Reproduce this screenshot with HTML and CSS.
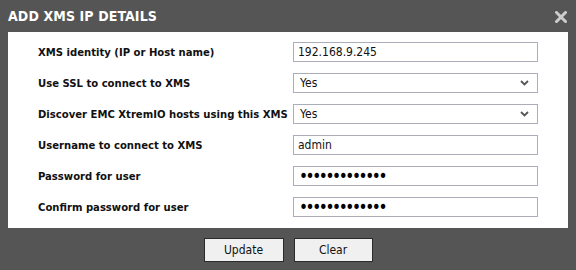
FILE: index.html
```html
<!DOCTYPE html>
<html>
<head>
<meta charset="utf-8">
<link rel="stylesheet" href="styles.css">
</head>
<body>
<div class="dialog">
  <div class="titlebar">
    <span class="title">ADD XMS IP DETAILS</span>
    <svg class="close" width="12" height="12" viewBox="0 0 12 12"><path d="M1.5 1.5 L10.5 10.5 M10.5 1.5 L1.5 10.5" stroke="#cccccc" stroke-width="3" stroke-linecap="square"/></svg>
  </div>
  <div class="panel">
    <div class="row">
      <label class="label">XMS identity (IP or Host name)</label>
      <input class="field" type="text" value="192.168.9.245">
    </div>
    <div class="row">
      <label class="label">Use SSL to connect to XMS</label>
      <div class="select"><span>Yes</span><svg class="chev" width="9" height="6" viewBox="0 0 9 6"><path d="M1 1 L4.5 4.5 L8 1" fill="none" stroke="#555" stroke-width="1.8"/></svg></div>
    </div>
    <div class="row">
      <label class="label">Discover EMC XtremIO hosts using this XMS</label>
      <div class="select"><span>Yes</span><svg class="chev" width="9" height="6" viewBox="0 0 9 6"><path d="M1 1 L4.5 4.5 L8 1" fill="none" stroke="#555" stroke-width="1.8"/></svg></div>
    </div>
    <div class="row">
      <label class="label">Username to connect to XMS</label>
      <input class="field" type="text" value="admin">
    </div>
    <div class="row">
      <label class="label">Password for user</label>
      <input class="field pw" type="password" value="abcdefghijklm">
    </div>
    <div class="row">
      <label class="label">Confirm password for user</label>
      <input class="field pw" type="password" value="abcdefghijklm">
    </div>
  </div>
  <div class="buttons">
    <button class="btn btn-update">Update</button>
    <button class="btn btn-clear">Clear</button>
  </div>
</div>
</body>
</html>
```
FILE: styles.css
```css
html, body {
  margin: 0;
  padding: 0;
  background: #555555;
}
body {
  width: 576px;
  height: 270px;
  overflow: hidden;
  font-family: "DejaVu Sans Condensed", "DejaVu Sans", sans-serif;
}
.dialog {
  display: flex;
  flex-direction: column;
}
.titlebar {
  height: 32px;
  display: flex;
  align-items: center;
  justify-content: space-between;
  padding: 0 9px 0 8px;
  box-sizing: border-box;
}
.title {
  color: #ffffff;
  font-weight: bold;
  font-size: 14px;
  letter-spacing: 0.1px;
}
.close {
  display: block;
  margin-top: 1px;
}
.panel {
  margin: 0 8px;
  background: #ffffff;
  padding: 10px 0 11px 30px;
  display: flex;
  flex-direction: column;
  gap: 11px;
}
.row {
  display: flex;
  align-items: center;
  height: 20px;
}
.label {
  width: 255px;
  flex: none;
  font-weight: bold;
  font-size: 11.2px;
  color: #111111;
  white-space: nowrap;
}
.field, .select {
  width: 245px;
  height: 20px;
  box-sizing: border-box;
  border: 1px solid #abadb8;
  background: #fff;
  font-family: "DejaVu Sans Condensed", "DejaVu Sans", sans-serif;
  font-size: 12px;
  color: #111;
  padding: 0 4px;
  margin: 0;
  outline: none;
}
.pw {
  font-size: 17px;
  letter-spacing: -2.4px;
  color: #000;
  padding: 0 5px;
}
.select {
  display: flex;
  align-items: center;
  justify-content: space-between;
  padding: 0 8px 0 6px;
}
.chev {
  display: block;
}
.buttons {
  display: flex;
  justify-content: center;
  gap: 10px;
  margin-top: 10px;
}
.btn {
  height: 24px;
  box-sizing: border-box;
  border: 1px solid #2a2a2a;
  background: #f0f0f0;
  font-family: "DejaVu Sans Condensed", "DejaVu Sans", sans-serif;
  font-size: 12px;
  color: #111;
  padding: 0;
  margin: 0;
}
.btn-update { width: 80px; }
.btn-clear { width: 79px; }
```
